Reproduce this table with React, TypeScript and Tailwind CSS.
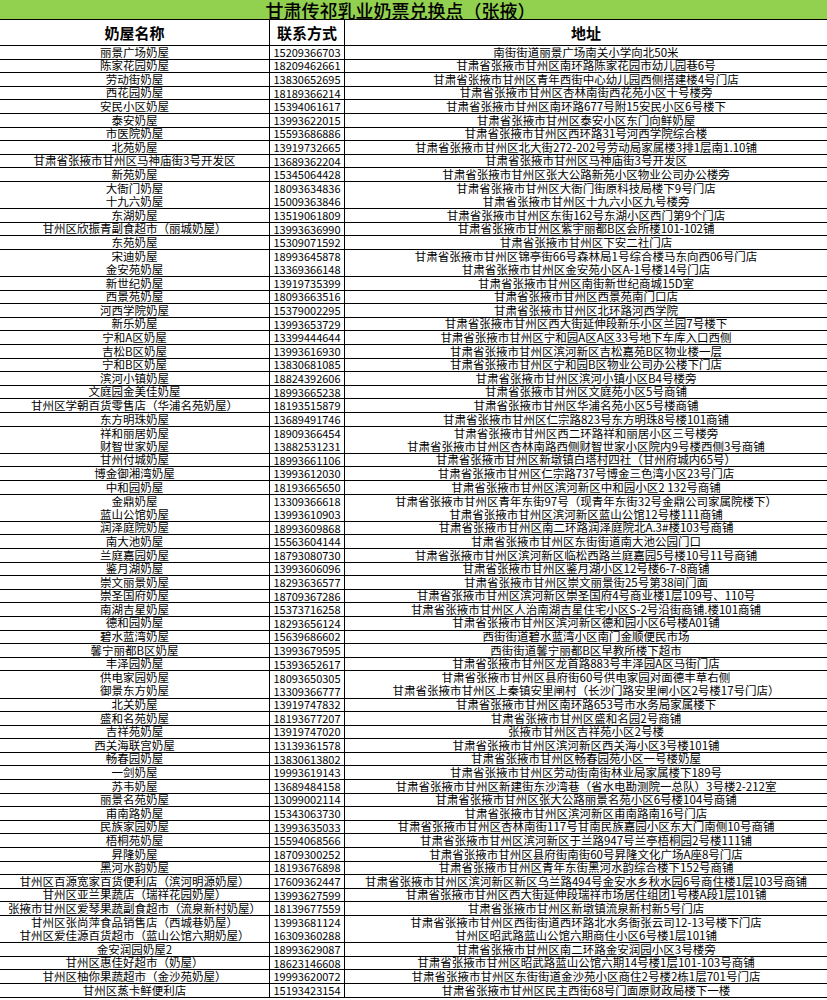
import React from "react";

type Row = [string, string, string, boolean?];

// the 4th value marks rows where the sheet shows no bottom line
const rows: Row[] = [
  ["丽景广场奶屋", "15209366703", "南街街道丽景广场南关小学向北50米"],
  ["陈家花园奶屋", "18209462661", "甘肃省张掖市甘州区南环路陈家花园市幼儿园巷6号"],
  ["劳动街奶屋", "13830652695", "甘肃省张掖市甘州区青年西街中心幼儿园西侧搭建楼4号门店"],
  ["西花园奶屋", "18189366214", "甘肃省张掖市甘州区杏林南街西花苑小区十号楼旁"],
  ["安民小区奶屋", "15394061617", "甘肃省张掖市甘州区南环路677号附15安民小区6号楼下"],
  ["泰安奶屋", "13993622015", "甘肃省张掖市甘州区泰安小区东门向鲜奶屋"],
  ["市医院奶屋", "15593686886", "甘肃省张掖市甘州区西环路31号河西学院综合楼"],
  ["北苑奶屋", "13919732665", "甘肃省张掖市甘州区北大街272-202号劳动局家属楼3排1层南1.10铺"],
  ["甘肃省张掖市甘州区马神庙街3号开发区", "13689362204", "甘肃省张掖市甘州区马神庙街3号开发区"],
  ["新苑奶屋", "15345064428", "甘肃省张掖市甘州区张大公路新苑小区物业公司办公楼旁"],
  ["大衙门奶屋", "18093634836", "甘肃省张掖市甘州区大衙门街原科技局楼下9号门店", true],
  ["十九六奶屋", "15009363846", "甘肃省张掖市甘州区十九六小区九号楼旁"],
  ["东湖奶屋", "13519061809", "甘肃省张掖市甘州区东街162号东湖小区西门第9个门店"],
  ["甘州区欣振青副食超市（丽城奶屋）", "13993636990", "甘肃省张掖市甘州区紫宇丽都B区会所楼101-102铺"],
  ["东苑奶屋", "15309071592", "甘肃省张掖市甘州区下安二社门店"],
  ["宋迪奶屋", "18993645878", "甘肃省张掖市甘州区锦亭街66号森林局1号综合楼马东向西06号门店", true],
  ["金安苑奶屋", "13369366148", "甘肃省张掖市甘州区金安苑小区A-1号楼14号门店"],
  ["新世纪奶屋", "13919735399", "甘肃省张掖市甘州区南街新世纪商城15D室"],
  ["西景苑奶屋", "18093663516", "甘肃省张掖市甘州区西景苑南门口店"],
  ["河西学院奶屋", "15379002295", "甘肃省张掖市甘州区北环路河西学院"],
  ["新乐奶屋", "13993653729", "甘肃省张掖市甘州区西大街延伸段新乐小区兰园7号楼下"],
  ["宁和A区奶屋", "13399444644", "甘肃省张掖市甘州区宁和园A区A区33号地下车库入口西侧"],
  ["吉松B区奶屋", "13993616930", "甘肃省张掖市甘州区滨河新区吉松嘉苑B区物业楼一层"],
  ["宁和B区奶屋", "13830681085", "甘肃省张掖市甘州区宁和园B区物业公司办公楼下门店"],
  ["滨河小镇奶屋", "18824392606", "甘肃省张掖市甘州区滨河小镇小区B4号楼旁"],
  ["文庭园金美佳奶屋", "18993665238", "甘肃省张掖市甘州区文庭苑小区5号商铺"],
  ["甘州区学朝百货零售店（华浦名苑奶屋）", "18193515879", "甘肃省张掖市甘州区华浦名苑小区5号楼商铺"],
  ["东方明珠奶屋", "13689491746", "甘肃省张掖市甘州区仁宗路823号东方明珠8号楼101商铺"],
  ["祥和丽居奶屋", "18909366454", "甘肃省张掖市甘州区西二环路祥和丽居小区三号楼旁", true],
  ["财智世家奶屋", "13882531231", "甘肃省张掖市甘州区杏林南路西侧财智世家小区院内9号楼西侧3号商铺"],
  ["甘州付城奶屋", "18993661106", "甘肃省张掖市甘州区新墩镇白塔村四社（甘州府城内65号）"],
  ["博金御湘湾奶屋", "13993612030", "甘肃省张掖市甘州区仁宗路737号博金三色湾小区23号门店"],
  ["中和园奶屋", "18193665650", "甘肃省张掖市甘州区滨河新区中和园小区2 132号商铺"],
  ["金鼎奶屋", "13309366618", "甘肃省张掖市甘州区青年东街97号（现青年东街32号金鼎公司家属院楼下）", true],
  ["蓝山公馆奶屋", "13993610903", "甘肃省张掖市甘州区滨河新区蓝山公馆12号楼111商铺"],
  ["润泽庭院奶屋", "18993609868", "甘肃省张掖市甘州区南二环路润泽庭院北A.3#楼103号商铺"],
  ["南大池奶屋", "15563604144", "甘肃省张掖市甘州区东街街道南大池公园门口"],
  ["兰庭嘉园奶屋", "18793080730", "甘肃省张掖市甘州区滨河新区临松西路兰庭嘉园5号楼10号11号商铺"],
  ["鉴月湖奶屋", "13993606096", "甘肃省张掖市甘州区鉴月湖小区12号楼6-7-8商铺"],
  ["崇文丽景奶屋", "18293636577", "甘肃省张掖市甘州区崇文丽景街25号第38间门面"],
  ["崇圣国府奶屋", "18709367286", "甘肃省张掖市甘州区滨河新区崇圣国府4号商业楼1层109号、110号"],
  ["南湖吉星奶屋", "15373716258", "甘肃省张掖市甘州区人治南湖吉星住宅小区S-2号沿街商铺.楼101商铺"],
  ["德和园奶屋", "18293656124", "甘肃省张掖市甘州区滨河新区德和园小区6号楼A01铺"],
  ["碧水蓝湾奶屋", "15639686602", "西街街道碧水蓝湾小区南门金顺便民市场"],
  ["馨宁丽都B区奶屋", "13993679595", "西街街道馨宁丽都B区早教所楼下超市"],
  ["丰泽园奶屋", "15393652617", "甘肃省张掖市甘州区龙首路883号丰泽园A区马街门店"],
  ["供电家园奶屋", "18093650305", "甘肃省张掖市甘州区县府街60号供电家园对面德丰草右侧", true],
  ["御景东方奶屋", "13309366777", "甘肃省张掖市甘州区上秦镇安里闸村（长沙门路安里闸小区2号楼17号门店）"],
  ["北关奶屋", "13919747832", "甘肃省张掖市甘州区南环路653号市水务局家属楼下"],
  ["盛和名苑奶屋", "18193677207", "甘肃省张掖市甘州区盛和名园2号商铺"],
  ["吉祥苑奶屋", "13919747020", "张掖市甘州区吉祥苑小区2号楼"],
  ["西关海联宫奶屋", "13139361578", "甘肃省张掖市甘州区滨河新区西关海小区3号楼101铺"],
  ["畅春园奶屋", "13830613802", "甘肃省张掖市甘州区畅春园苑小区一号楼奶屋"],
  ["一剑奶屋", "19993619143", "甘肃省张掖市甘州区劳动街南街林业局家属楼下189号"],
  ["苏韦奶屋", "13689484158", "甘肃省张掖市甘州区新建街东沙湾巷（省水电勘测院一总队）3号楼2-212室"],
  ["丽景名苑奶屋", "13099002114", "甘肃省张掖市甘州区张大公路丽景名苑小区6号楼104号商铺"],
  ["甫南路奶屋", "15343063730", "甘肃省张掖市甘州区滨河新区甫南路南16号门店"],
  ["民族家园奶屋", "13993635033", "甘肃省张掖市甘州区杏林南街117号甘南民族嘉园小区东大门南侧10号商铺"],
  ["梧桐苑奶屋", "15594068566", "甘肃省张掖市甘州区滨河新区于兰路947号兰亭梧桐园2号楼111铺"],
  ["昇隆奶屋", "18709300252", "甘肃省张掖市甘州区县府街南街60号昇隆文化广场A座8号门店"],
  ["黑河水韵奶屋", "18193676898", "甘肃省张掖市甘州区青年东街黑河水韵综合楼下152号商铺"],
  ["甘州区百源宽家百货便利店（滨河明源奶屋）", "17609362447", "甘肃省张掖市甘州区滨河新区新区乌兰路494号金安水乡秋水园6号商住楼1层103号商铺"],
  ["甘州区亚兰果蔬店（瑞祥花园奶屋）", "13993627599", "甘肃省张掖市甘州区西大街延伸段瑞祥市场居住组团1号楼A段1层101铺"],
  ["张掖市甘州区爱琴果蔬副食超市（流泉新村奶屋）", "18139677559", "甘肃省张掖市甘州区新墩镇流泉新村新5号门店"],
  ["甘州区张尚萍食品销售店（西城巷奶屋）", "13993681124", "甘肃省张掖市甘州区西街街道西环路北水务衙张云司12-13号楼下门店", true],
  ["甘州区爱佳源百货超市（蓝山公馆六期奶屋）", "16309360288", "甘州区昭武路蓝山公馆六期商住小区6号楼1层101铺"],
  ["金安润园奶屋2", "18993629087", "甘肃省张掖市甘州区南二环路金安润园小区3号楼旁"],
  ["甘州区惠佳好超市（奶屋）", "18623146608", "甘肃省张掖市甘州区昭武路蓝山公馆六期14号楼1层101-103号商铺"],
  ["甘州区柚你果蔬超市（金沙苑奶屋）", "19993620072", "甘肃省张掖市甘州区东街街道金沙苑小区商住2号楼2栋1层701号门店"],
  ["甘州区蒸卡鲜便利店", "15193423154", "甘肃省张掖市甘州区民主西街68号门面原财政局楼下一楼"],
];

const App = () => {
  return (
    <div className="w-[827px] bg-white text-black font-['Noto_Sans_CJK_SC',sans-serif]">
      <div className="h-[20px] bg-[#92d050] border-b border-black flex items-center justify-center pr-[26px]">
        <span className="text-[18px] leading-none font-medium">甘肃传祁乳业奶票兑换点（张掖）</span>
      </div>
      <div className="h-[26px] grid grid-cols-[270px_75px_1fr] border-b border-black">
        <div className="border-r border-black flex items-center justify-center text-[15px] font-bold leading-none">奶屋名称</div>
        <div className="border-r border-black flex items-center justify-center text-[15px] font-bold leading-none">联系方式</div>
        <div className="flex items-center justify-center text-[15px] font-bold leading-none">地址</div>
      </div>
      {rows.map(([name, phone, addr, noLine], i) => (
        <div
          key={i}
          className={`h-[13.6px] grid grid-cols-[270px_75px_1fr] text-[11.5px] leading-none ${
            noLine ? "" : "border-b border-black"
          }`}
        >
          <div className="border-r border-black flex items-center justify-center whitespace-nowrap">{name}</div>
          <div className="border-r border-black flex items-center justify-center whitespace-nowrap text-[11px]">{phone}</div>
          <div className="flex items-center justify-center whitespace-nowrap">{addr}</div>
        </div>
      ))}
    </div>
  );
};

export default App;
